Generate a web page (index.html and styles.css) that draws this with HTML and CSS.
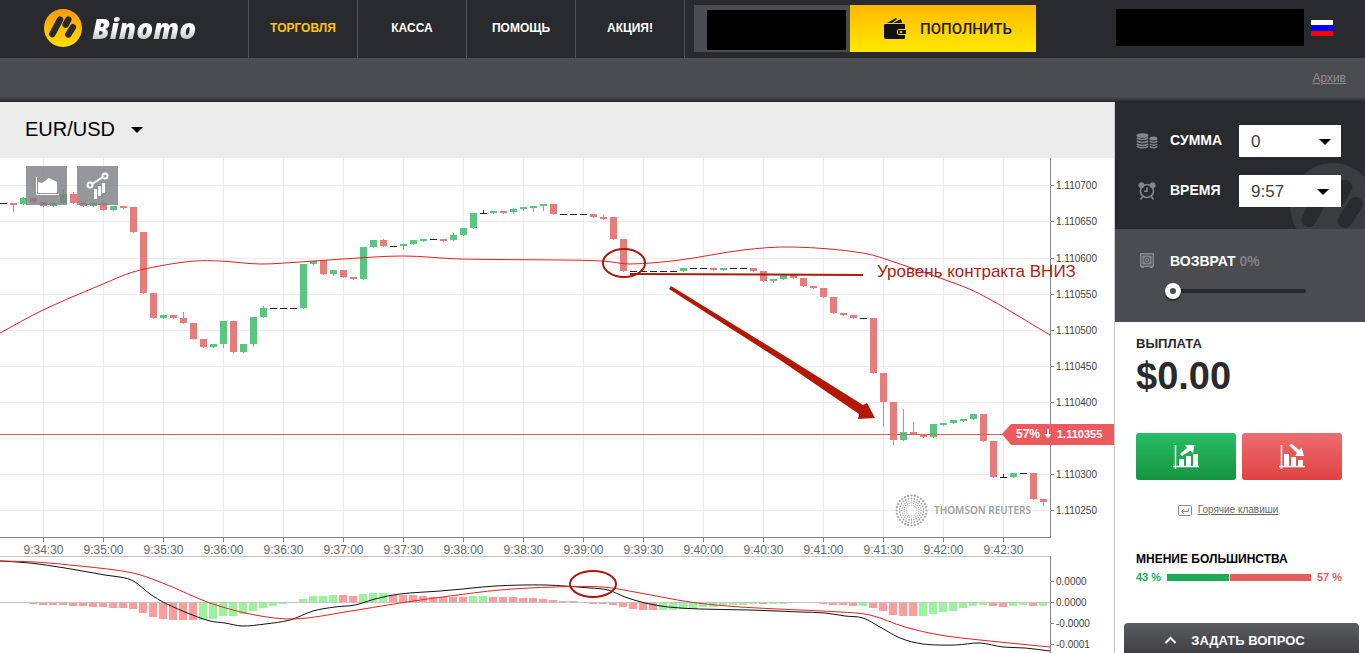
FILE: index.html
```html
<!DOCTYPE html>
<html lang="ru">
<head>
<meta charset="utf-8">
<title>Binomo — Торговля</title>
<link rel="stylesheet" href="styles.css">
</head>
<body>
<svg class="defs" aria-hidden="true">
  <defs>
    <linearGradient id="gold" x1="0" y1="0" x2="0" y2="1">
      <stop offset="0" stop-color="#ff980e"/><stop offset="1" stop-color="#ffe000"/>
    </linearGradient>
    <g id="mark" fill="none" stroke-width="17" stroke-linecap="round">
      <path d="M-28 16L-8 -22M7 -9L14 -22M26 -2L14 17"/>
    </g>
  </defs>
</svg>

<header class="topbar">
  <a class="logo" href="#">
    <svg class="logo-mark" viewBox="-50 -50 100 100"><circle r="50" fill="url(#gold)"/><use href="#mark" stroke="#292a2e"/></svg>
    <span class="logo-name">Binomo</span>
  </a>
  <nav class="nav">
    <a class="nav-link active" href="#">ТОРГОВЛЯ</a>
    <a class="nav-link" href="#">КАССА</a>
    <a class="nav-link" href="#">ПОМОЩЬ</a>
    <a class="nav-link" href="#">АКЦИЯ!</a>
  </nav>
  <div class="balance"><span class="balance-value"></span></div>
  <button class="deposit" type="button">
    <svg class="deposit-icon" viewBox="0 0 22 22">
      <path d="M3 5L12 0L13 1L8 5ZM9 5L17 1L18 5Z"/>
      <path d="M1 6H20Q21 6 21 7V11H15Q13 11 13 13V15Q13 17 15 17H21V20Q21 21 20 21H2Q0 21 0 19V7Q0 6 1 6Z"/>
      <path d="M15 12H22V16H15Q14 16 14 15V13Q14 12 15 12Z"/><circle cx="17" cy="14" r="1.2" fill="#ffd000"/>
    </svg>
    ПОПОЛНИТЬ
  </button>
  <div class="account"></div>
  <button class="flag" type="button" aria-label="Русский"><i></i><i></i><i></i></button>
</header>

<div class="subbar"><a href="#">Архив</a></div>

<div class="workspace">
  <main class="trade">
    <div class="asset-bar">
      <span class="asset"><select class="asset-select" aria-label="Актив"><option>EUR/USD</option></select></span>
    </div>
    <div class="chart-wrap">
      <svg class="chart" id="chart" viewBox="0 158 1114 495"></svg>
      <div class="tools">
        <button class="tool" type="button" aria-label="Тип графика">
          <svg viewBox="0 0 24 20"><path d="M1.500 1V18.500H24" fill="none" stroke="#fff"/><path d="M3 17V6L7 7L14 2L22 6V17Z" fill="#fff"/></svg>
        </button>
        <button class="tool" type="button" aria-label="Индикаторы">
          <svg class="tool-indicator" viewBox="0 0 24 27"><path d="M6 12L17 5" stroke="#fff" stroke-width="2"/><circle cx="4" cy="13" r="2.500" fill="none" stroke="#fff" stroke-width="2"/><circle cx="19" cy="4" r="2.500" fill="none" stroke="#fff" stroke-width="2"/><path d="M8 17h3v10H8zM12 14h3v10H12zM16 11h3v10H16z" fill="#fff"/></svg>
        </button>
      </div>
    </div>
  </main>

  <aside class="side">
    <section class="order">
      <svg class="watermark" viewBox="-50 -50 100 100"><circle r="50" fill="#3b3c40"/><use href="#mark" stroke="#292a2e"/></svg>
      <div class="field">
        <svg class="field-icon" viewBox="0 0 22 16" fill="#85868a">
          <ellipse cx="6.500" cy="2.500" rx="6" ry="2.300"/><ellipse cx="17.500" cy="5.500" rx="4" ry="2"/>
          <path fill="none" stroke="#85868a" stroke-width="1.500" d="M.7 5Q6.500 8 12.300 5M.7 8Q6.500 11 12.300 8M.7 11Q6.500 14 12.300 11M.7 13.300Q6.500 16.300 12.300 13.300M13.700 8.200Q17.500 11 21.300 8.200M13.700 11Q17.500 13.600 21.300 11M13.700 13.300Q17.500 16 21.300 13.300"/>
        </svg>
        <label for="sum">СУММА</label>
        <span class="pick"><select id="sum"><option>0</option></select></span>
      </div>
      <div class="field">
        <svg class="field-icon" viewBox="0 0 22 18" fill="none" stroke="#85868a" stroke-width="1.600">
          <circle cx="11" cy="9" r="6.500"/><path d="M11 5.500V9.300H8M7 14L4.500 17.500M15 14L17.500 17.500"/>
          <circle cx="5.400" cy="3.200" r="2.900" fill="#85868a" stroke="none"/><circle cx="16.600" cy="3.200" r="2.900" fill="#85868a" stroke="none"/>
        </svg>
        <label for="time">ВРЕМЯ</label>
        <span class="pick pick-time"><select id="time"><option>9:57</option></select></span>
      </div>
    </section>

    <section class="refund">
      <svg class="refund-icon" viewBox="0 0 22 16">
        <rect x="4" y="0" width="14" height="14" rx="1" fill="#88898c"/><rect x="6" y="2" width="10" height="10" fill="none" stroke="#4b4c4f"/>
        <circle cx="11" cy="7" r="2.800" fill="none" stroke="#4b4c4f"/><circle cx="11" cy="7" r="1" fill="#4b4c4f"/><path d="M5 14h3v1H5zM14 14h3v1H14z" fill="#88898c"/>
      </svg>
      <div class="refund-body">
        <label class="refund-label" for="refund">ВОЗВРАТ <span>0%</span></label>
        <input id="refund" class="slider" type="range" min="0" max="10" value="0">
      </div>
    </section>

    <section class="payout">
      <h2 class="payout-title">ВЫПЛАТА</h2>
      <div class="payout-value">$0.00</div>
      <div class="bets">
        <button class="bet up" type="button" aria-label="Вверх">
          <svg viewBox="0 0 26 26"><path d="M2.500 1V25M0 22.500H26" stroke="#fff" stroke-width="1.500"/><path d="M6 15h5v7H6zM13 12h5v10H13zM20 10h5v12H20zM7 10L14 4L12 1H21.500L20 9L17.500 6.500L9 12Z" fill="#fff"/></svg>
        </button>
        <button class="bet down" type="button" aria-label="Вниз">
          <svg viewBox="0 0 26 26"><path d="M2.500 1V25M0 22.500H26" stroke="#fff" stroke-width="1.500"/><path d="M5 10h5v12H5zM12 13h5v9H12zM19 16h5v6H19zM10 1L13 0L20 6L22.500 3.500L25 12H16L18 9Z" fill="#fff"/></svg>
        </button>
      </div>
      <div class="hotkeys">
        <svg class="key-icon" viewBox="0 0 14 11" fill="none" stroke="#8a8a8a"><rect x=".5" y=".5" width="13" height="10" rx="1"/><path d="M10.500 3.500V6.500H4M5.500 4.500L3.500 6.500L5.500 8.500"/></svg>
        <a href="#">Горячие клавиши</a>
      </div>
      <h2 class="crowd-title">МНЕНИЕ БОЛЬШИНСТВА</h2>
      <div class="crowd">
        <span class="crowd-up">43 %</span>
        <span class="crowd-bar"><i style="flex-grow:43"></i><i style="flex-grow:57"></i></span>
        <span class="crowd-down">57 %</span>
      </div>
    </section>

    <button class="ask" type="button">
      <svg viewBox="0 0 12 8"><path d="M1 7L6 2L11 7" fill="none" stroke="#fff" stroke-width="2"/></svg>
      ЗАДАТЬ ВОПРОС
    </button>
  </aside>
</div>
<script src="chart.js"></script>
</body>
</html>
```

FILE: styles.css
```css
* { box-sizing: border-box; }

body {
  margin: 0;
  min-height: 100vh;
  display: flex;
  flex-direction: column;
  background: #fff;
  color: #292a2e;
  font-family: "Liberation Sans", Arial, sans-serif;
}

button, select { font-family: inherit; border: 0; border-radius: 0; cursor: pointer; }
h2 { margin: 0; }
.defs { position: absolute; width: 0; height: 0; }

.topbar {
  display: flex;
  height: 58px;
  padding-right: 32px;
  background: #292a2e;
}

.logo {
  display: flex;
  align-items: center;
  width: 248px;
  padding: 0 0 2px 44px;
  gap: 10px;
  text-decoration: none;
}
.logo-mark { width: 38px; height: 38px; }
.logo-name {
  padding-right: 4px;
  font: italic 800 28px/38px "Open Sans", sans-serif;
  background: linear-gradient(#fff 50%, #bbb 85%);
  -webkit-background-clip: text;
  background-clip: text;
  color: transparent;
}

.nav { display: flex; border-left: 1px solid #515256; }
.nav-link {
  width: 109px;
  border-right: 1px solid #515256;
  color: #fff;
  font-size: 12px;
  font-weight: bold;
  line-height: 56px;
  text-align: center;
  text-decoration: none;
}
.nav-link.active { color: #ffc50f; }

.balance {
  width: 156px;
  height: 47px;
  margin: 5px 0 0 9px;
  padding: 5px 4px 2px 13px;
  background: #4b4c4f;
}
.balance-value { display: block; height: 100%; background: #000; border-radius: 1px; }

.deposit {
  display: flex;
  align-items: center;
  gap: 14px;
  width: 186px;
  height: 47px;
  margin-top: 5px;
  padding: 0 0 0 34px;
  background: linear-gradient(#ffb900, #ffe900);
  color: #1a1a1a;
  font-family: Roboto, "Liberation Sans", sans-serif;
  font-size: 15px;
  font-weight: 500;
}
.deposit-icon { width: 22px; height: 22px; fill: #111; }

.account {
  width: 188px;
  height: 37px;
  margin: 9px 7px 0 auto;
  background: #000;
  border-radius: 1px;
}
.flag {
  display: flex;
  flex-direction: column;
  width: 22px;
  height: 16px;
  margin-top: 20px;
  padding: 0;
}
.flag i { flex: 1; background: #fff; }
.flag i:nth-child(2) { background: #00f; }
.flag i:nth-child(3) { background: #f00; }

.subbar {
  height: 44px;
  padding-right: 19px;
  background: linear-gradient(#4b4c4f 88%, #26272a);
  font-size: 12px;
  line-height: 40px;
  text-align: right;
}
.subbar a { color: #8b8c90; }

.workspace { display: flex; flex: 1; }
.trade { flex: 1; min-width: 0; border-right: 1px solid #ccc; }

.asset-bar {
  display: flex;
  align-items: center;
  height: 56px;
  padding: 0 25px 2px;
  background: #ececec;
}
.asset, .pick { position: relative; display: block; }
.asset::after, .pick::after {
  content: "";
  position: absolute;
  top: 50%;
  right: 0;
  margin-top: -2px;
  border: 6px solid transparent;
  border-top-color: #000;
  border-bottom: 0;
  pointer-events: none;
}
.asset-select {
  appearance: none;
  width: 118px;
  padding: 0;
  background: none;
  color: #000;
  font-size: 20px;
}

.chart-wrap { position: relative; }
.chart { display: block; width: 100%; height: auto; }
.tools { position: absolute; top: 8px; left: 26px; display: flex; gap: 10px; }
.tool {
  display: flex;
  align-items: center;
  justify-content: center;
  width: 41px;
  height: 39px;
  padding: 0;
  background: rgba(122, 125, 130, .8);
}
.tool svg { width: 24px; height: 20px; }
.tool .tool-indicator { height: 27px; }

.side { display: flex; flex-direction: column; width: 250px; }

.order {
  position: relative;
  display: flex;
  flex-direction: column;
  gap: 18px;
  height: 127px;
  padding: 23px 24px 0 21px;
  overflow: hidden;
  background: #292a2e;
}
.watermark { position: absolute; top: 61px; left: 175px; width: 86px; height: 86px; }
.field { position: relative; display: flex; align-items: center; font-size: 14px; }
.field-icon { width: 22px; height: 18px; margin-right: 12px; }
.field label { flex: 1; padding-bottom: 2px; color: #fff; font-weight: bold; }
.pick { width: 102px; }
.pick::after { right: 10px; }
.pick-time::after { right: 12px; }
.pick select {
  appearance: none;
  display: block;
  width: 100%;
  height: 32px;
  padding: 0 12px;
  background: #fff;
  color: #3d3e42;
  font-size: 17px;
}

.refund {
  display: flex;
  gap: 12px;
  height: 93px;
  padding: 24px 21px 0;
  background: #4b4c4f;
}
.refund-icon { width: 22px; height: 16px; }
.refund-label { display: block; color: #fff; font-size: 14px; font-weight: bold; line-height: 16px; }
.refund-label span { color: #808184; }

.slider {
  appearance: none;
  display: block;
  width: 141px;
  height: 18px;
  margin: 13px 0 0 -5px;
  background: none;
}
.slider::-webkit-slider-runnable-track {
  height: 4px;
  border-radius: 2px;
  background: #292a2e;
}
.slider::-webkit-slider-thumb {
  appearance: none;
  width: 16px;
  height: 16px;
  margin-top: -6px;
  border: 5px solid #fff;
  border-radius: 50%;
  background: #4b4c4f;
  box-shadow: 0 2px 2px rgba(0, 0, 0, .5);
}

.payout { padding: 14px 23px 0 21px; }
.payout-title { font-size: 13px; line-height: 16px; }
.payout-value { font-size: 38px; font-weight: bold; line-height: 48px; }
.bets { display: flex; gap: 6px; margin-top: 33px; }
.bet {
  display: flex;
  flex: 1;
  align-items: center;
  justify-content: center;
  height: 47px;
  padding: 0;
  border-radius: 3px;
}
.bet svg { width: 26px; height: 26px; }
.bet.up { background: linear-gradient(#28bd66, #179440); }
.bet.down { background: linear-gradient(#ec6d6f, #e04244); }

.hotkeys {
  display: flex;
  align-items: center;
  justify-content: center;
  gap: 6px;
  margin-top: 22px;
  padding-right: 22px;
  font-size: 10px;
  line-height: 16px;
}
.hotkeys a { color: #65666a; }
.key-icon { width: 14px; height: 11px; }

.crowd-title { margin-top: 33px; color: #000; font-size: 12px; line-height: 16px; }
.crowd { display: flex; align-items: center; gap: 6px; font-size: 11px; font-weight: bold; line-height: 20px; }
.crowd-bar { display: flex; flex: 1; gap: 1px; height: 7px; }
.crowd-bar i { background: #20aa58; }
.crowd-bar i + i { background: #e55c5e; }
.crowd-up { color: #20aa58; }
.crowd-down { color: #e55c5e; }

.ask {
  display: flex;
  align-items: center;
  justify-content: center;
  gap: 14px;
  height: 30px;
  margin: auto 6px 0 9px;
  padding: 4px 14px 0 0;
  border-radius: 4px 4px 0 0;
  background: linear-gradient(#5b5c60, #404144);
  color: #fff;
  font-size: 13px;
  font-weight: bold;
}
.ask svg { width: 13px; height: 8px; }

.chart text { font-family: "Liberation Sans", Arial, sans-serif; }
.grid { stroke: #ececec; }
.axis { stroke: #858585; }
.divider { stroke: #c4c4c4; }
.price-label { font-size: 10px; fill: #444; }
.time-label { font-size: 12px; fill: #666; text-anchor: middle; }
.rise { fill: #5ac682; stroke: #5ac682; }
.fall { fill: #e67c7c; stroke: #e67c7c; }
.flat { stroke: #222; }
.hist-rise { fill: #9cf39c; }
.hist-fall { fill: #ff9c9c; }
.line { fill: none; stroke: #e02222; }
.line-dark { stroke: #111; }
.level { stroke: #e55c5e; }
.tag { fill: #ec5a60; }
.chart .tag-text { font-size: 12px; font-weight: bold; fill: #fff; }
.chart .tag-price { font-size: 11px; font-weight: bold; fill: #fff; }
.chart .brand { font: 600 10px "Noto Sans", sans-serif; fill: #a0a0a0; }
.brand-dot { fill: #a0a0a0; }
.pen { fill: none; stroke: #a81c0c; stroke-width: 2; }
.pen-fill { fill: #b31804; }
.chart .note { font-size: 17px; fill: #b01c10; }
```

FILE: chart.js
```js
const NS = 'http://www.w3.org/2000/svg';
const svg = document.getElementById('chart');

function add(tag, attrs, text) {
  const el = document.createElementNS(NS, tag);
  for (const name in attrs) el.setAttribute(name, attrs[name]);
  if (text) el.textContent = text;
  svg.appendChild(el);
}
const line = (x1, y1, x2, y2, cls) => add('line', { x1, y1, x2, y2, class: cls });

/* Grid and axes */
const prices = [['1.110700', 185], ['1.110650', 221], ['1.110600', 258], ['1.110550', 294], ['1.110500', 330],
  ['1.110450', 366], ['1.110400', 402], ['', 438], ['1.110300', 474], ['1.110250', 510]];
const times = ['9:34:30', '9:35:00', '9:35:30', '9:36:00', '9:36:30', '9:37:00', '9:37:30', '9:38:00', '9:38:30',
  '9:39:00', '9:39:30', '9:40:00', '9:40:30', '9:41:00', '9:41:30', '9:42:00', '9:42:30'];
prices.forEach(([, y]) => line(0, y + .5, 1050, y + .5, 'grid'));
times.forEach((t, i) => line(43.5 + 60 * i, 158, 43.5 + 60 * i, 537, 'grid'));

/* Candles: [slot, top, bottom, direction, wick top, wick bottom] */
const candles = [[1,203,205,'d',203,212],[2,198,204,'u',197],[3,198,202,'d'],[4,202,206,'d'],[5,203,206,'u'],[6,194,203,'u',189],
  [7,194,203,'d',192],[8,203,206,'d'],[9,203,206,'u'],[10,203,210,'d'],[11,206,210,'u'],[12,206,208,'d'],[13,207,232,'d'],
  [14,232,293,'d'],[15,293,318,'d'],[16,315,318,'u'],[17,315,318,'d'],[18,318,323,'d',312],[19,323,339,'d'],[20,339,347,'d'],
  [21,344,347,'u'],[22,321,344,'u',321,348],[23,321,352,'d'],[24,344,352,'u'],[25,317,344,'u',317,347],[26,308,317,'u',306],
  [30,264,308,'u'],[31,261,264,'u'],[32,260,274,'d'],[33,270,274,'u',270,276],[34,270,277,'d'],[35,277,279,'d'],[36,247,279,'u'],
  [37,240,247,'u'],[38,240,246,'d',239],[40,244,246,'u',244,250],[41,240,244,'u'],[42,239,241,'u'],[44,239,241,'d'],
  [45,235,240,'u',233],[46,228,235,'u'],[47,213,228,'u'],[49,211,213,'u'],[50,211,213,'d'],[51,209,212,'u',208,214],
  [52,207,209,'u',207,211],[53,206,208,'u',206,212],[54,204,206,'u',204,211],[55,204,214,'d'],[59,214,217,'d'],[60,217,219,'d',215],
  [61,217,239,'d'],[62,239,271,'d'],[68,268,271,'u'],[71,268,270,'d'],[72,268,270,'u'],[75,268,271,'d'],[76,271,281,'d'],
  [77,279,281,'u',279,283],[78,275,279,'u'],[79,275,278,'d'],[80,278,286,'d'],[81,286,288,'d'],[82,288,297,'d'],[83,297,313,'d'],
  [84,313,315,'d'],[85,315,318,'d'],[87,318,373,'d'],[88,373,402,'d',373,427],[89,402,440,'d',402,445],[90,432,440,'u',409],
  [91,432,434,'d',422],[92,434,437,'d'],[93,424,437,'u'],[94,423,425,'u'],[95,420,423,'u'],[96,419,421,'u'],[97,414,419,'u'],
  [98,414,441,'d'],[99,441,477,'d'],[101,473,477,'u'],[103,473,499,'d'],[104,499,502,'d',499,506]];
candles.forEach(([k, top, bottom, dir, hi = top, lo = bottom + 1]) => {
  const cls = dir === 'u' ? 'rise' : 'fall';
  const x = 10 * k;
  add('rect', { x, y: top, width: 7, height: bottom - top, class: cls, 'stroke-width': 0 });
  line(x + 3.5, hi, x + 3.5, lo, cls);
});
/* Flat candles: [slot, level] */
[[0,203],[27,308],[28,308],[29,308],[39,246],[43,239],[48,213],[56,214],[57,214],[58,214],[63,271],[64,271],[65,271],[66,271],[67,271],
  [69,268],[70,268],[73,268],[74,268],[86,318],[100,477],[102,473]]
  .forEach(([k, y]) => line(10 * k, y + .5, 10 * k + 7, y + .5, 'flat'));
line(483.5, 210, 483.5, 214, 'flat');
line(1003.5, 474, 1003.5, 478, 'flat');

/* Smooth curve through the given points */
function curve(p, cls) {
  let d = `M${p[0]}`;
  for (let i = 0; i < p.length - 1; i++) {
    const a = p[i - 1] || p[i], b = p[i], c = p[i + 1], e = p[i + 2] || c;
    const h = (c[0] - b[0]) / 3;
    const m1 = (c[1] - a[1]) / (c[0] - a[0] || 1);
    const m2 = (e[1] - b[1]) / (e[0] - b[0] || 1);
    d += `C${b[0] + h},${b[1] + m1 * h} ${c[0] - h},${c[1] - m2 * h} ${c}`;
  }
  add('path', { d, class: cls });
}
curve([[0,333],[43,310],[103,284],[133,272],[165,265],[195,261],[220,261],[260,264],[300,262],[343,259],[403,256],[460,259],
  [560,260],[603,261],[630,264],[680,260],[743,250],[793,247],[863,253],[900,264],[940,278],[980,294],[1050,335]], 'line');

/* Oscillator histogram: [slot, edge, direction] */
const zero = 602;
const hist = [[2,603,'d'],[3,604,'d'],[4,605,'d'],[5,605,'d'],[6,605,'d'],[7,606,'d'],[8,606,'d'],[9,607,'d'],[10,607,'d'],[11,608,'d'],
  [12,608,'d'],[13,609,'d'],[14,613,'d'],[15,617,'d'],[16,619,'d'],[17,620,'d'],[18,620,'d'],[19,620,'d'],[20,620,'u'],[21,619,'u'],
  [22,616,'u'],[23,616,'u'],[24,614,'u'],[25,611,'u'],[26,608,'u'],[27,606,'u'],[28,604,'u'],[30,599,'u'],[31,596,'u'],[32,596,'u'],
  [33,595,'u'],[34,595,'d'],[35,596,'d'],[36,594,'u'],[37,593,'u'],[38,593,'u'],[39,595,'d'],[40,595,'d'],[41,595,'d'],[42,596,'d'],
  [43,597,'d'],[44,597,'d'],[45,597,'d'],[46,597,'d'],[47,596,'u'],[48,596,'u'],[49,597,'d'],[50,597,'d'],[51,597,'d'],[52,598,'d'],
  [53,598,'d'],[54,599,'d'],[55,600,'d'],[56,601,'d'],[57,601,'d'],[59,604,'d'],[60,604,'d'],[61,605,'d'],[62,607,'d'],[63,609,'d'],
  [64,610,'d'],[65,610,'d'],[66,610,'u'],[67,610,'u'],[68,609,'u'],[69,609,'u'],[70,607,'u'],[71,607,'u'],[72,605,'u'],[73,605,'u'],
  [74,605,'u'],[75,604,'u'],[76,604,'d'],[77,604,'u'],[78,604,'u'],[79,603,'u'],[80,603,'d'],[81,603,'d'],[82,604,'d'],[83,605,'d'],
  [84,605,'d'],[85,606,'d'],[86,606,'u'],[87,608,'d'],[88,611,'d'],[89,615,'d'],[90,616,'d'],[91,616,'d'],[92,616,'u'],[93,614,'u'],
  [94,612,'u'],[95,611,'u'],[96,608,'u'],[97,606,'u'],[98,605,'u'],[99,606,'d'],[100,607,'d'],[101,606,'u'],[102,605,'u'],
  [103,606,'d'],[104,606,'u']];
hist.forEach(([k, y, dir]) => add('rect', {
  x: 10 * k - 1, y: Math.min(y, zero), width: 8, height: Math.abs(y - zero) || 1,
  class: dir === 'u' ? 'hist-rise' : 'hist-fall'
}));
line(0, 602.5, 1050, 602.5, 'divider');
curve([[0,561],[30,563],[65,568],[105,575],[125,578],[135,582],[150,594],[165,603],[190,614],[210,621],[225,623],[242,626],[265,624],
  [290,620],[313,611],[335,607],[355,605],[375,599],[400,594],[440,591],[463,589],[495,586],[545,585],[590,588],[608,590],[625,597],
  [645,603],[668,607],[700,609],[750,610],[800,612],[825,613],[845,616],[863,618],[880,627],[900,638],[923,644],[955,645],[980,643],
  [1003,647],[1025,648],[1050,651]], 'line line-dark');
curve([[0,561],[35,562],[80,566],[133,573],[165,584],[210,603],[255,615],[295,619],[345,612],[400,603],[450,596],[500,590],[555,587],
  [603,587],[640,593],[690,602],[740,607],[800,610],[840,612],[870,615],[905,627],[940,635],[980,640],[1050,647]], 'line');

line(0, 537.5, 1051, 537.5, 'axis');
line(1050.5, 158, 1050.5, 537, 'axis');
line(0, 556.5, 1051, 556.5, 'divider');
line(1050.5, 556, 1050.5, 653, 'axis');
prices.forEach(([label, y]) => {
  if (!label) return;
  line(1050, y + .5, 1054, y + .5, 'axis');
  add('text', { x: 1056, y: y + 4, class: 'price-label' }, label);
});
times.forEach((t, i) => {
  line(43.5 + 60 * i, 537, 43.5 + 60 * i, 542, 'axis');
  add('text', { x: 43.5 + 60 * i, y: 554, class: 'time-label' }, t);
});
[['0.0000', 581], ['0.0000', 602], ['-0.0000', 623], ['-0.0001', 644]].forEach(([label, y]) => {
  line(1050, y + .5, 1054, y + .5, 'axis');
  add('text', { x: 1056, y: y + 4, class: 'price-label' }, label);
});

/* Data provider */
[[5.5, 20, .5], [7.5, 22, .6], [9.5, 24, .7], [12, 26, .9], [15, 28, 1.1]].forEach(([r, n, size], ring) => {
  for (let i = 0; i < n; i++) {
    const a = 2 * Math.PI * (i + ring % 2 / 2) / n;
    add('circle', { cx: 911.5 + r * Math.cos(a), cy: 510.5 + r * Math.sin(a), r: size, class: 'brand-dot' });
  }
});
add('text', { x: 934, y: 514, class: 'brand' }, 'THOMSON REUTERS');

/* Current price */
line(0, 434.5, 1004, 434.5, 'level');
add('path', { d: 'M1002 434L1011 424H1114V445H1011Z', class: 'tag' });
add('text', { x: 1016, y: 438, class: 'tag-text' }, '57%');
add('path', { d: 'M1047 429h2v5h2.500L1048 438.500L1044.500 434h2.500Z', fill: '#fff' });
add('text', { x: 1057, y: 438, class: 'tag-price' }, '1.110355');

/* Annotations */
add('ellipse', { cx: 624, cy: 263, rx: 21, ry: 14, class: 'pen' });
add('ellipse', { cx: 593, cy: 584, rx: 23, ry: 13, class: 'pen' });
line(630, 274, 863, 275, 'pen');
add('path', { d: 'M669 289L671 286L780 353L863 405L867 403L875 418L858 419L859 414L780 360Z', class: 'pen-fill' });
add('text', { x: 877, y: 277, class: 'note' }, 'Уровень контракта ВНИЗ');
```
